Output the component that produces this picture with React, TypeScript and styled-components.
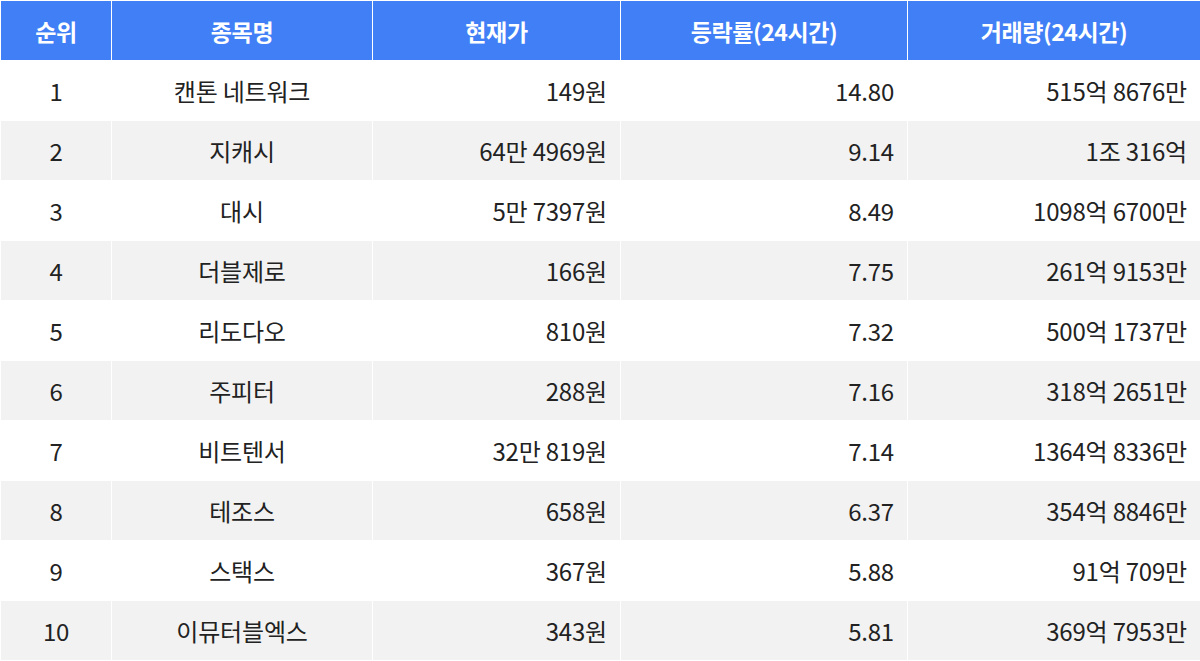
import React from "react";
import styled, { createGlobalStyle } from "styled-components";

const Global = createGlobalStyle`
  html, body { margin: 0; padding: 0; background: #fff; }
  body { font-family: "Noto Sans CJK KR", "Noto Sans", sans-serif; }
`;

const Table = styled.table`
  width: 1200px;
  border-collapse: collapse;
  table-layout: fixed;
  font-family: "Noto Sans CJK KR", "Noto Sans", sans-serif;
  font-size: 24px;
  color: #222;
`;

const Th = styled.th<{ $w: number }>`
  width: ${(p) => p.$w}px;
  height: 60px;
  box-sizing: border-box;
  background: #417ff6;
  color: #fff;
  font-size: 23px;
  font-weight: 700;
  text-align: center;
  border: 1px solid #fff;
  padding: 0;
  letter-spacing: -0.4px;
`;

const Tr = styled.tr<{ $alt: boolean }>`
  background: ${(p) => (p.$alt ? "#f2f2f2" : "#fff")};
`;

const Td = styled.td<{ $align: "center" | "right" }>`
  height: 60px;
  box-sizing: border-box;
  border: 1px solid #fff;
  text-align: ${(p) => p.$align};
  padding: 0 ${(p) => (p.$align === "right" ? "13px" : "0")} 0 0;
  font-weight: 400;
  letter-spacing: -0.2px;
`;

const headers: [string, number][] = [
  ["순위", 111],
  ["종목명", 261],
  ["현재가", 248],
  ["등락률(24시간)", 287],
  ["거래량(24시간)", 293],
];

const rows: [string, string, string, string, string][] = [
  ["1", "캔톤 네트워크", "149원", "14.80", "515억 8676만"],
  ["2", "지캐시", "64만 4969원", "9.14", "1조 316억"],
  ["3", "대시", "5만 7397원", "8.49", "1098억 6700만"],
  ["4", "더블제로", "166원", "7.75", "261억 9153만"],
  ["5", "리도다오", "810원", "7.32", "500억 1737만"],
  ["6", "주피터", "288원", "7.16", "318억 2651만"],
  ["7", "비트텐서", "32만 819원", "7.14", "1364억 8336만"],
  ["8", "테조스", "658원", "6.37", "354억 8846만"],
  ["9", "스택스", "367원", "5.88", "91억 709만"],
  ["10", "이뮤터블엑스", "343원", "5.81", "369억 7953만"],
];

export default function App() {
  return (
    <>
      <Global />
      <Table>
        <thead>
          <tr>
            {headers.map(([h, w]) => (
              <Th key={h} $w={w}>
                {h}
              </Th>
            ))}
          </tr>
        </thead>
        <tbody>
          {rows.map((r, i) => (
            <Tr key={r[0]} $alt={i % 2 === 1}>
              <Td $align="center">{r[0]}</Td>
              <Td $align="center">{r[1]}</Td>
              <Td $align="right">{r[2]}</Td>
              <Td $align="right">{r[3]}</Td>
              <Td $align="right">{r[4]}</Td>
            </Tr>
          ))}
        </tbody>
      </Table>
    </>
  );
}
